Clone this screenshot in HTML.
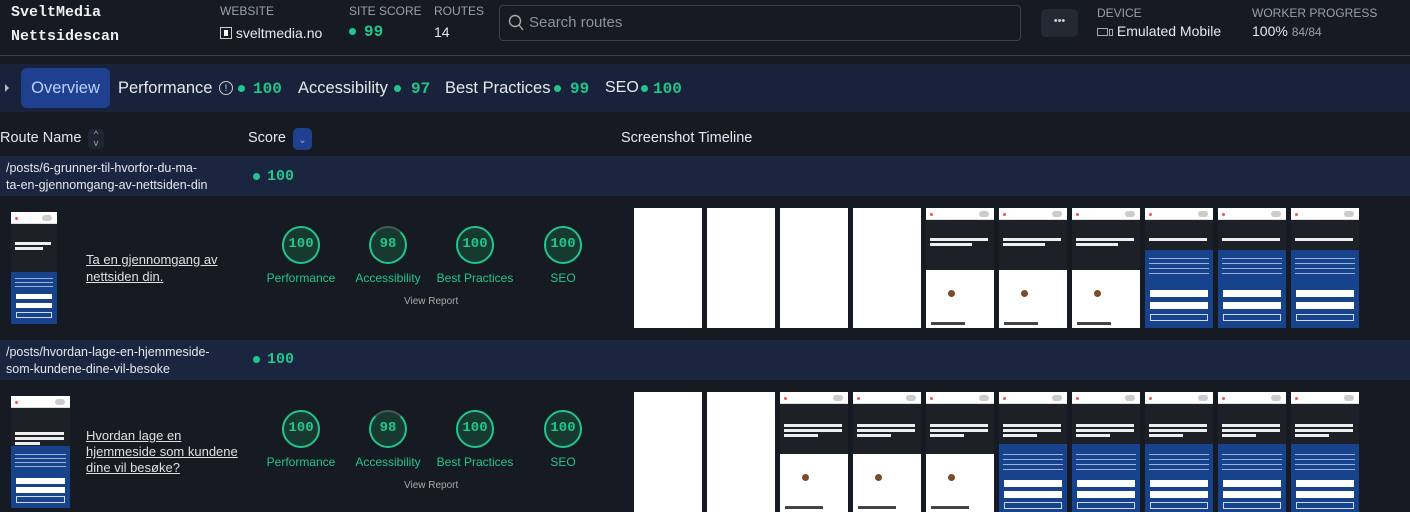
<!DOCTYPE html>
<html><head><meta charset="utf-8"><style>
*{margin:0;padding:0;box-sizing:border-box}
body{width:1410px;height:512px;overflow:hidden;background:#161a22;font-family:"Liberation Sans",sans-serif;color:#e6e8ec;position:relative}
.a{position:absolute;white-space:nowrap}
.mono{font-family:"Liberation Mono",monospace;font-weight:bold}
.lbl{font-size:12px;color:#9aa0aa}
.g{color:#22c58b}
.dot{display:inline-block;width:7px;height:7px;border-radius:50%;background:#22c58b;vertical-align:middle}
.th{position:absolute;width:68px;height:120px;background:#fff;overflow:hidden}
.th .h{position:absolute;left:0;top:0;width:100%;height:12px;background:#fff;border-bottom:1px solid #ddd}
.th .h:before{content:"";position:absolute;left:4px;top:5px;width:3px;height:3px;border-radius:50%;background:#e55}
.th .h:after{content:"";position:absolute;right:5px;top:3px;width:10px;height:6px;border-radius:3px;background:#ccc}
.th .hero{position:absolute;left:0;top:12px;width:100%;background:#1d2026}
.th .hero i{position:absolute;left:4px;right:6px;height:3px;background:#eee}
.th .blue{position:absolute;left:0;bottom:0;width:100%;background:#17428c}
.th .blue b{position:absolute;left:5px;right:5px;height:7px;background:#fff}
.th .blue s{position:absolute;left:5px;right:5px;height:7px;border:1px solid #cfd8ee}
.th .blue u{position:absolute;left:4px;right:4px;height:1px;background:#9db0d6}
.th .body i{position:absolute;background:#bbb}
.gauge{position:absolute;text-align:center;width:90px}
.gauge .c{margin:0 auto;width:38px;height:38px;border-radius:50%;border:2.5px solid #22c58b;background:#173a30;font-family:"Liberation Mono",monospace;font-weight:bold;font-size:14px;color:#22c58b;line-height:33px}
.gauge .t{font-size:12px;color:#22c58b;margin-top:7px}
.tab{font-size:16.5px;top:79px}
</style></head><body>

<div class="a mono" style="left:11px;top:4px;font-size:15px;color:#f0f0f0">SveltMedia</div>
<div class="a mono" style="left:11px;top:28px;font-size:15px;color:#f0f0f0">Nettsidescan</div>
<div class="a lbl" style="left:220px;top:4px">WEBSITE</div>
<div class="a" style="left:220px;top:25px;font-size:14px"><span style="display:inline-block;width:12px;height:12px;border:1px solid #ccc;vertical-align:-1px;position:relative"><span style="position:absolute;left:3px;top:2px;width:4px;height:6px;background:#fff"></span></span> sveltmedia.no</div>
<div class="a lbl" style="left:349px;top:4px">SITE SCORE</div>
<div class="a mono g" style="left:349px;top:23px;font-size:16px"><span class="dot" style="margin-right:8px"></span>99</div>
<div class="a lbl" style="left:434px;top:4px">ROUTES</div>
<div class="a" style="left:434px;top:24px;font-size:14px">14</div>
<div class="a" style="left:499px;top:5px;width:522px;height:36px;border:1px solid #3a3f49;border-radius:4px"></div>
<svg class="a" style="left:508px;top:14px" width="16" height="18" viewBox="0 0 16 18"><circle cx="7" cy="7" r="5.5" fill="none" stroke="#aaa" stroke-width="1.4"/><line x1="11" y1="11" x2="15" y2="16" stroke="#aaa" stroke-width="1.4"/></svg>
<div class="a" style="left:529px;top:14px;font-size:15px;color:#8d939c">Search routes</div>
<div class="a" style="left:1041px;top:9px;width:37px;height:28px;background:#232a33;border-radius:5px;color:#ccc;font-size:11px;text-align:center;line-height:24px">•••</div>
<div class="a lbl" style="left:1097px;top:6px">DEVICE</div>
<div class="a" style="left:1097px;top:23px;font-size:14px"><span style="display:inline-block;width:11px;height:8px;border:1px solid #aaa;vertical-align:0"></span><span style="display:inline-block;width:4px;height:7px;border:1px solid #aaa;margin-left:1px;vertical-align:0"></span> Emulated Mobile</div>
<div class="a lbl" style="left:1252px;top:6px">WORKER PROGRESS</div>
<div class="a" style="left:1252px;top:23px;font-size:14px">100% <span style="font-size:12px;color:#9aa0aa">84/84</span></div>
<div class="a" style="left:0;top:55px;width:1410px;height:1px;background:#3a3f48"></div>

<div class="a" style="left:0;top:64px;width:1410px;height:48px;background:#18223a"></div>
<div class="a" style="left:5px;top:84px;width:0;height:0;border-left:4px solid #bbb;border-top:4px solid transparent;border-bottom:4px solid transparent"></div>
<div class="a" style="left:21px;top:68px;width:89px;height:40px;background:#1f3f8f;border-radius:6px;color:#bcd0ff;font-size:16.5px;text-align:center;line-height:40px">Overview</div>
<div class="a tab" style="left:118px">Performance</div>
<div class="a" style="left:219px;top:81px;width:14px;height:14px;border:1px solid #ccc;border-radius:50%;font-size:9px;text-align:center;line-height:12px">!</div>
<div class="a tab" style="left:298px">Accessibility</div>
<div class="a tab" style="left:445px">Best Practices</div>
<div class="a tab" style="left:605px;font-size:16px">SEO</div>
<div class="a dot" style="left:238px;top:85px"></div><div class="a mono g" style="left:253px;top:80px;font-size:16px">100</div>
<div class="a dot" style="left:394px;top:85px"></div><div class="a mono g" style="left:411px;top:80px;font-size:16px">97</div>
<div class="a dot" style="left:554px;top:85px"></div><div class="a mono g" style="left:570px;top:80px;font-size:16px">99</div>
<div class="a dot" style="left:641px;top:85px"></div><div class="a mono g" style="left:653px;top:80px;font-size:16px">100</div>

<div class="a" style="left:0;top:130px;font-size:14.5px">Route Name</div>
<div class="a" style="left:88px;top:129px;width:16px;height:20px;background:#1e2430;border-radius:4px;color:#aaa;font-size:9px;text-align:center;line-height:9px;padding-top:1px">^<br>v</div>
<div class="a" style="left:248px;top:130px;font-size:14.5px">Score</div>
<div class="a" style="left:293px;top:128px;width:19px;height:22px;background:#1f3f8f;border-radius:5px;color:#aac;font-size:10px;text-align:center;line-height:26px">⌄</div>
<div class="a" style="left:621px;top:130px;font-size:14.5px">Screenshot Timeline</div>

<div class="a" style="left:0;top:156px;width:1410px;height:40px;background:#1a2540"></div>
<div class="a" style="left:6px;top:160px;font-size:12.5px;line-height:17px">/posts/6-grunner-til-hvorfor-du-ma-<br>ta-en-gjennomgang-av-nettsiden-din</div>
<div class="a mono g" style="left:253px;top:168px;font-size:15px"><span class="dot" style="margin-right:7px"></span>100</div>

<div class="th" style="left:11px;top:212px;width:46px;height:112px">
 <div class="h"></div><div class="hero" style="height:48px"><i style="top:18px"></i><i style="top:23px;right:14px"></i></div>
 <div class="blue" style="height:52px"><u style="top:6px"></u><u style="top:10px"></u><u style="top:14px"></u><b style="top:22px;height:5px"></b><b style="top:31px;height:5px"></b><s style="top:40px;height:6px"></s></div>
</div>
<div class="a" style="left:86px;top:251px;font-size:13px;line-height:17px;text-decoration:underline;color:#e0e0e0">Ta en gjennomgang av<br>nettsiden din.</div>

<div class="gauge" style="left:256px;top:226px"><div class="c">100</div><div class="t">Performance</div></div>
<div class="gauge" style="left:343px;top:226px"><div class="c" style="border-top-color:#4a5a55">98</div><div class="t">Accessibility</div></div>
<div class="gauge" style="left:430px;top:226px"><div class="c">100</div><div class="t">Best Practices</div></div>
<div class="gauge" style="left:518px;top:226px"><div class="c">100</div><div class="t">SEO</div></div>
<div class="a" style="left:404px;top:296px;font-size:10px;color:#aaa">View Report</div>

<div class="th" style="left:634px;top:208px"></div>
<div class="th" style="left:707px;top:208px"></div>
<div class="th" style="left:780px;top:208px"></div>
<div class="th" style="left:853px;top:208px"></div>
<div class="th" style="left:926px;top:208px"><div class="h"></div><div class="hero" style="height:50px"><i style="top:18px"></i><i style="top:23px;right:22px"></i></div><div class="body"><i style="left:22px;top:82px;width:7px;height:7px;border-radius:50%;background:#7a4a2a"></i><i style="left:5px;top:114px;width:34px;height:3px;background:#444"></i></div></div>
<div class="th" style="left:999px;top:208px"><div class="h"></div><div class="hero" style="height:50px"><i style="top:18px"></i><i style="top:23px;right:22px"></i></div><div class="body"><i style="left:22px;top:82px;width:7px;height:7px;border-radius:50%;background:#7a4a2a"></i><i style="left:5px;top:114px;width:34px;height:3px;background:#444"></i></div></div>
<div class="th" style="left:1072px;top:208px"><div class="h"></div><div class="hero" style="height:50px"><i style="top:18px"></i><i style="top:23px;right:22px"></i></div><div class="body"><i style="left:22px;top:82px;width:7px;height:7px;border-radius:50%;background:#7a4a2a"></i><i style="left:5px;top:114px;width:34px;height:3px;background:#444"></i></div></div>
<div class="th" style="left:1145px;top:208px"><div class="h"></div><div class="hero" style="height:30px"><i style="top:18px"></i></div><div class="blue" style="height:78px"><u style="top:8px"></u><u style="top:13px"></u><u style="top:18px"></u><u style="top:23px"></u><b style="top:40px"></b><b style="top:52px"></b><s style="top:64px"></s></div></div>
<div class="th" style="left:1218px;top:208px"><div class="h"></div><div class="hero" style="height:30px"><i style="top:18px"></i></div><div class="blue" style="height:78px"><u style="top:8px"></u><u style="top:13px"></u><u style="top:18px"></u><u style="top:23px"></u><b style="top:40px"></b><b style="top:52px"></b><s style="top:64px"></s></div></div>
<div class="th" style="left:1291px;top:208px"><div class="h"></div><div class="hero" style="height:30px"><i style="top:18px"></i></div><div class="blue" style="height:78px"><u style="top:8px"></u><u style="top:13px"></u><u style="top:18px"></u><u style="top:23px"></u><b style="top:40px"></b><b style="top:52px"></b><s style="top:64px"></s></div></div>

<div class="a" style="left:0;top:340px;width:1410px;height:40px;background:#1a2540"></div>
<div class="a" style="left:6px;top:344px;font-size:12.5px;line-height:17px">/posts/hvordan-lage-en-hjemmeside-<br>som-kundene-dine-vil-besoke</div>
<div class="a mono g" style="left:253px;top:351px;font-size:15px"><span class="dot" style="margin-right:7px"></span>100</div>

<div class="th" style="left:11px;top:396px;width:59px;height:112px">
 <div class="h"></div><div class="hero" style="height:50px"><i style="top:24px"></i><i style="top:29px"></i><i style="top:34px;right:30px"></i></div>
 <div class="blue" style="height:62px"><u style="top:8px"></u><u style="top:12px"></u><u style="top:16px"></u><u style="top:20px"></u><b style="top:32px;height:6px"></b><b style="top:41px;height:6px"></b><s style="top:50px;height:7px"></s></div>
</div>
<div class="a" style="left:86px;top:428px;font-size:13px;line-height:16px;text-decoration:underline;color:#e0e0e0">Hvordan lage en<br>hjemmeside som kundene<br>dine vil besøke?</div>

<div class="gauge" style="left:256px;top:410px"><div class="c">100</div><div class="t">Performance</div></div>
<div class="gauge" style="left:343px;top:410px"><div class="c" style="border-top-color:#4a5a55">98</div><div class="t">Accessibility</div></div>
<div class="gauge" style="left:430px;top:410px"><div class="c">100</div><div class="t">Best Practices</div></div>
<div class="gauge" style="left:518px;top:410px"><div class="c">100</div><div class="t">SEO</div></div>
<div class="a" style="left:404px;top:480px;font-size:10px;color:#aaa">View Report</div>

<div class="th" style="left:634px;top:392px"></div>
<div class="th" style="left:707px;top:392px"></div>
<div class="th" style="left:780px;top:392px"><div class="h"></div><div class="hero" style="height:50px"><i style="top:20px"></i><i style="top:25px"></i><i style="top:30px;right:30px"></i></div><div class="body"><i style="left:22px;top:82px;width:7px;height:7px;border-radius:50%;background:#7a4a2a"></i><i style="left:5px;top:114px;width:38px;height:3px;background:#444"></i></div></div>
<div class="th" style="left:853px;top:392px"><div class="h"></div><div class="hero" style="height:50px"><i style="top:20px"></i><i style="top:25px"></i><i style="top:30px;right:30px"></i></div><div class="body"><i style="left:22px;top:82px;width:7px;height:7px;border-radius:50%;background:#7a4a2a"></i><i style="left:5px;top:114px;width:38px;height:3px;background:#444"></i></div></div>
<div class="th" style="left:926px;top:392px"><div class="h"></div><div class="hero" style="height:50px"><i style="top:20px"></i><i style="top:25px"></i><i style="top:30px;right:30px"></i></div><div class="body"><i style="left:22px;top:82px;width:7px;height:7px;border-radius:50%;background:#7a4a2a"></i><i style="left:5px;top:114px;width:38px;height:3px;background:#444"></i></div></div>
<div class="th" style="left:999px;top:392px"><div class="h"></div><div class="hero" style="height:50px"><i style="top:20px"></i><i style="top:25px"></i><i style="top:30px;right:30px"></i></div><div class="blue" style="height:68px"><u style="top:10px"></u><u style="top:15px"></u><u style="top:20px"></u><u style="top:25px"></u><b style="top:36px"></b><b style="top:47px"></b><s style="top:58px"></s></div></div>
<div class="th" style="left:1072px;top:392px"><div class="h"></div><div class="hero" style="height:50px"><i style="top:20px"></i><i style="top:25px"></i><i style="top:30px;right:30px"></i></div><div class="blue" style="height:68px"><u style="top:10px"></u><u style="top:15px"></u><u style="top:20px"></u><u style="top:25px"></u><b style="top:36px"></b><b style="top:47px"></b><s style="top:58px"></s></div></div>
<div class="th" style="left:1145px;top:392px"><div class="h"></div><div class="hero" style="height:50px"><i style="top:20px"></i><i style="top:25px"></i><i style="top:30px;right:30px"></i></div><div class="blue" style="height:68px"><u style="top:10px"></u><u style="top:15px"></u><u style="top:20px"></u><u style="top:25px"></u><b style="top:36px"></b><b style="top:47px"></b><s style="top:58px"></s></div></div>
<div class="th" style="left:1218px;top:392px"><div class="h"></div><div class="hero" style="height:50px"><i style="top:20px"></i><i style="top:25px"></i><i style="top:30px;right:30px"></i></div><div class="blue" style="height:68px"><u style="top:10px"></u><u style="top:15px"></u><u style="top:20px"></u><u style="top:25px"></u><b style="top:36px"></b><b style="top:47px"></b><s style="top:58px"></s></div></div>
<div class="th" style="left:1291px;top:392px"><div class="h"></div><div class="hero" style="height:50px"><i style="top:20px"></i><i style="top:25px"></i><i style="top:30px;right:30px"></i></div><div class="blue" style="height:68px"><u style="top:10px"></u><u style="top:15px"></u><u style="top:20px"></u><u style="top:25px"></u><b style="top:36px"></b><b style="top:47px"></b><s style="top:58px"></s></div></div>

</body></html>
